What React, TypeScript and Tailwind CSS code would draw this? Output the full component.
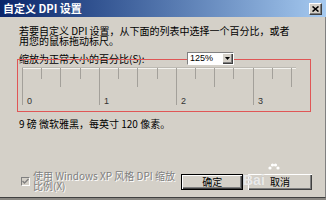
import React from 'react'

const CJK = '"Noto Sans CJK SC", "Noto Sans", sans-serif'

function CloseButton() {
    return (
        <div className="w-[13px] h-[12px] bg-[#d4d0c8] border-t border-l border-white border-r border-b border-r-[#404040] border-b-[#404040] shadow-[inset_-1px_-1px_0_#808080] flex items-center justify-center">
            <svg width="7" height="6" viewBox="0 0 7 6">
                <path d="M0.5 0.5 L6.5 5.5 M6.5 0.5 L0.5 5.5" stroke="#000" strokeWidth="1.6" />
            </svg>
        </div>
    )
}

function Ruler() {
    const step = 76.9 / 4
    const ticks = Array.from({ length: 15 }, (_, i) => i)
    return (
        <svg width="276" height="40" viewBox="0 0 276 40" className="block">
            <line x1="1" y1="1.5" x2="275" y2="1.5" stroke="#f4f3ef" />
            <line x1="1" y1="0.5" x2="275" y2="0.5" stroke="#bdbab3" />
            {ticks.map((i) => {
                const x = Math.round(1 + i * step) + 0.5
                const end = i % 4 === 0 ? 38 : i % 2 === 0 ? 20 : 12
                return <line key={i} x1={x} y1="1" x2={x} y2={end} stroke="#a3a09a" />
            })}
            {[0, 1, 2, 3].map((n) => (
                <text
                    key={n}
                    x={Math.round(1 + n * 76.9) + 5}
                    y="37"
                    fontSize="9"
                    fill="#333"
                    fontFamily='"Liberation Sans", Arial, sans-serif'
                >
                    {n}
                </text>
            ))}
        </svg>
    )
}

export default function App() {
    return (
        <div
            className="relative w-[326px] h-[200px] overflow-hidden bg-[#d4d0c8] flex flex-col text-black"
            style={{ fontFamily: CJK }}
        >
            {/* Title bar */}
            <div className="h-[17px] flex-shrink-0 flex items-center justify-between pl-[3px] pr-[4px] bg-gradient-to-r from-[#0a246a] to-[#a6caf0]">
                <span className="text-[11px] leading-[11px] font-bold text-white">自定义 DPI 设置</span>
                <CloseButton />
            </div>

            {/* Body */}
            <div className="flex-1 flex flex-col pl-[19px] pr-[13px] pt-[9px] pb-[7px] border-b border-[#404040] border-r border-r-[#808080]">
                <p className="text-[10px] leading-[10px]">
                    若要自定义 DPI 设置，从下面的列表中选择一个百分比，或者
                    <br />
                    用您的鼠标拖动标尺。
                </p>

                <div className="mt-[6px] h-[13px] flex items-center">
                    <span className="w-[168px] text-[10px] leading-[10px]">缩放为正常大小的百分比(S):</span>
                    <div className="relative z-10 w-[47px] h-[13px] bg-white border-t border-l border-[#808080] border-r border-b border-r-white border-b-white flex items-center">
                        <span className="flex-1 pl-[2px] text-[9px] leading-[9px]" style={{ fontFamily: '"Liberation Sans", Arial, sans-serif' }}>125%</span>
                        <div className="w-[11px] h-full bg-[#d4d0c8] shadow-[inset_1px_1px_0_#fff,inset_-1px_-1px_0_#404040,inset_-2px_-2px_0_#808080] flex items-center justify-center">
                            <svg width="5" height="3" viewBox="0 0 5 3">
                                <path d="M0 0 H5 L2.5 3 Z" fill="#000" />
                            </svg>
                        </div>
                    </div>
                </div>

                <div className="mt-[2px] ml-[2px]">
                    <Ruler />
                </div>

                <p className="mt-[12px] text-[10px] leading-[10px]">9 磅 微软雅黑，每英寸 120 像素。</p>

                {/* Footer */}
                <div className="mt-auto flex items-end">
                    <div className="ml-[2px] mb-[4px] w-[9px] h-[9px] flex-shrink-0 border-t border-l border-[#808080] border-r border-b border-r-white border-b-white bg-[#d4d0c8] flex items-center justify-center">
                        <svg width="7" height="7" viewBox="0 0 7 7">
                            <path d="M0.5 3 L2.5 5 L6.5 1" stroke="#808080" strokeWidth="1.4" fill="none" />
                        </svg>
                    </div>
                    <p className="ml-[3px] mb-[-1px] w-[149px] text-[10px] leading-[10px] text-[#808080] [text-shadow:1px_1px_0_#fff]">
                        使用 Windows XP 风格 DPI 缩放
                        <br />
                        比例(X)
                    </p>
                    <button className="w-[62px] h-[16px] border border-black bg-[#d4d0c8] text-[10px] leading-[10px]">
                        <div className="h-full flex items-center justify-center shadow-[inset_1px_1px_0_#fff,inset_-1px_-1px_0_#404040,inset_-2px_-2px_0_#808080]">
                            确定
                        </div>
                    </button>
                    <button className="ml-[5px] w-[64px] h-[16px] bg-[#d4d0c8] text-[10px] leading-[10px] shadow-[inset_1px_1px_0_#fff,inset_-1px_-1px_0_#404040,inset_-2px_-2px_0_#808080] flex items-center justify-center">
                        取消
                    </button>
                </div>
            </div>
            <div className="h-[2px] flex-shrink-0 bg-[#8a8782]" />

            {/* Red annotation frame */}
            <div className="absolute left-[17px] top-[59px] w-[294px] h-[53px] border border-[#e05656] pointer-events-none" />

            {/* Watermark */}
            <div className="absolute left-[243px] top-[163px] flex items-start gap-[3px] pointer-events-none">
                <span className="mt-[10px] text-[14px] leading-[14px] font-bold text-white/70 [text-shadow:0_0_1px_#bbb]" style={{ fontFamily: '"Liberation Sans", Arial, sans-serif' }}>
                    Bai
                </span>
                <svg width="12" height="10" viewBox="0 0 12 10">
                    <circle cx="2" cy="5" r="1.6" fill="#fff" />
                    <circle cx="4.5" cy="2" r="1.6" fill="#fff" />
                    <circle cx="7.5" cy="2" r="1.6" fill="#fff" />
                    <circle cx="10" cy="5" r="1.6" fill="#fff" />
                </svg>
            </div>
        </div>
    )
}
